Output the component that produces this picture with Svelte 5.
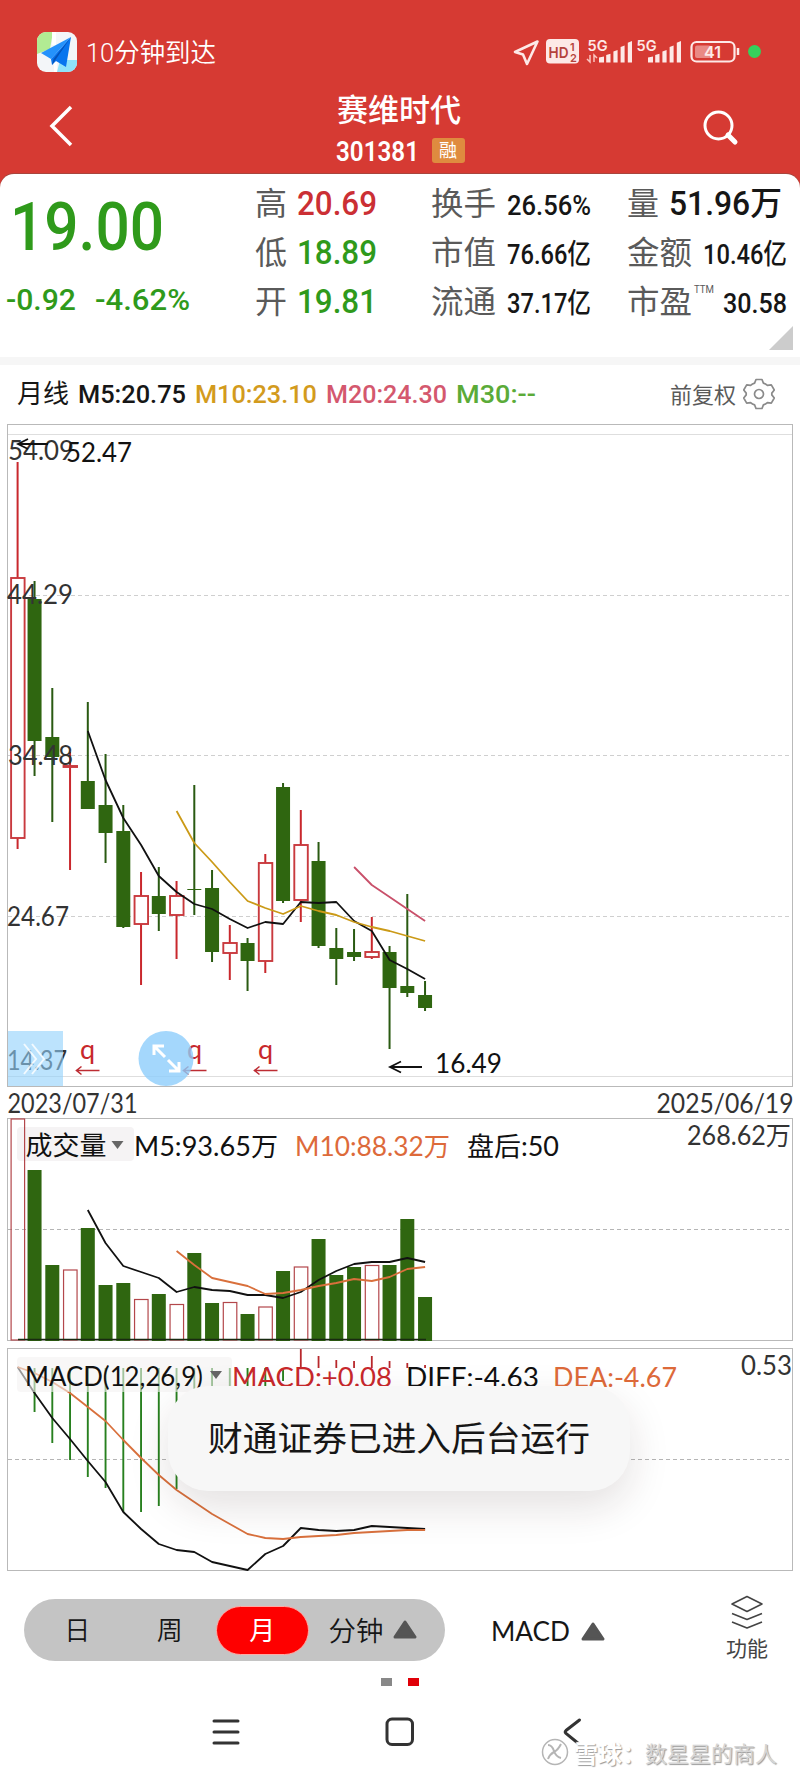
<script lang="ts">
  interface Candle {
    up: boolean
    high: number
    top: number
    bottom: number
    low: number
  }

  interface Label {
    text: string
    x: number
    y: number
    width: number
    cls?: string
    size?: number
  }

  // Chart geometry
  const X0 = 16.8
  const STEP = 17.75
  const BAR = 14
  const cx = (i: number) => Math.max(17.6, X0 + i * STEP)

  const raw: [number, number, number, number, number][] = [
    [1, 462, 578, 838, 849],
    [0, 581, 599, 741, 776],
    [0, 688, 737, 757, 822],
    [1, 752, 766, 767, 870],
    [0, 702, 781, 809, 809],
    [0, 754, 805, 833, 863],
    [0, 805, 831, 927, 928],
    [1, 872, 896, 924, 985],
    [0, 867, 896, 914, 931],
    [1, 881, 896, 915, 959],
    [0, 785, 889, 890, 915],
    [0, 870, 888, 952, 962],
    [1, 925, 943, 953, 980],
    [0, 938, 943, 961, 991],
    [1, 854, 863, 961, 973],
    [0, 783, 787, 901, 903],
    [1, 810, 845, 900, 922],
    [0, 842, 861, 946, 948],
    [0, 928, 948, 959, 985],
    [0, 929, 952, 957, 961],
    [1, 917, 952, 957, 959],
    [0, 946, 952, 988, 1049],
    [0, 894, 986, 993, 997],
    [0, 981, 995, 1008, 1011]
  ]
  const candles: Candle[] = raw.map(([up, high, top, bottom, low]) => ({ up: !!up, high, top, bottom, low }))

  const volumes = [
    1119, 1170, 1265, 1270, 1228, 1285, 1283, 1299.5, 1294, 1304.5, 1253, 1303,
    1302.5, 1314, 1307, 1271, 1267, 1239, 1275, 1267, 1265.5, 1265, 1219, 1297
  ]

  // Lines: first bar index, then one y per bar
  const line = (start: number, ys: number[]) => ys.map((y, i) => `${cx(start + i).toFixed(1)},${y}`).join(' ')

  const ma5 = line(4, [731, 780, 818, 845, 876, 892, 904, 909, 919, 928, 922, 924, 902, 903, 902, 921, 931, 960, 969, 979])
  const ma10 = line(9, [811, 843, 862, 882, 901, 908, 914, 906, 911, 915, 922, 927, 931, 936, 941])
  const ma20 = line(19, [867, 885, 897, 909, 921])
  const vol5 = line(4, [1210, 1243, 1266, 1272, 1278, 1292, 1287, 1290, 1291, 1295, 1295, 1298, 1292, 1280, 1271, 1264, 1262, 1262, 1258, 1262])
  const vol10 = line(9, [1251, 1265, 1278, 1282, 1286, 1294, 1293, 1290, 1286, 1283, 1279, 1281, 1277, 1269, 1267])
  const diff = line(0, [
    1367, 1393, 1418, 1439, 1461, 1482, 1512, 1529, 1544, 1550, 1552, 1562,
    1566, 1570, 1554, 1546, 1528, 1530, 1531, 1530, 1526, 1527, 1528, 1529
  ])
  const dea = line(0, [
    1367, 1373, 1382, 1393, 1407, 1421, 1440, 1458, 1475, 1490, 1502, 1514,
    1524, 1534, 1538, 1539, 1537, 1536, 1535, 1533, 1532, 1531, 1530, 1530
  ])

  const MACD_ZERO = 1368
  const macd = [
    1368, 1412, 1443, 1460, 1477, 1488, 1512, 1512, 1506, 1489, 1450, 1440,
    1420, 1400, 1390, 1381, 1349, 1356, 1360, 1361, 1356, 1361, 1363, 1365
  ]

  const axisLabels: Label[] = [
    { text: '54.09', x: 8, y: 460, width: 66, cls: 'axis' },
    { text: '52.47', x: 66, y: 462, width: 66 },
    { text: '44.29', x: 7, y: 604, width: 66, cls: 'axis' },
    { text: '34.48', x: 8, y: 764.5, width: 65, cls: 'axis' },
    { text: '24.67', x: 7, y: 925.5, width: 62, cls: 'axis' },
    { text: '16.49', x: 435, y: 1072.5, width: 67 },
    { text: '2023/07/31', x: 7.5, y: 1113, width: 130, cls: 'axis' },
    { text: '2025/06/19', x: 656.5, y: 1113, width: 137, cls: 'axis' },
    { text: '268.62万', x: 687, y: 1144.5, width: 104, cls: 'axis' }
  ]

  const volumeLabels: Label[] = [
    { text: '成交量', x: 25.5, y: 1155, width: 81, size: 26 },
    { text: 'M5:93.65万', x: 134, y: 1156, width: 144 },
    { text: 'M10:88.32万', x: 295, y: 1156, width: 155, cls: 'orange' },
    { text: '盘后:50', x: 467, y: 1156, width: 92 }
  ]

  const macdLabels: Label[] = [
    { text: 'MACD(12,26,9)', x: 25, y: 1385.5, width: 178 },
    { text: 'MACD:+0.08', x: 232, y: 1387, width: 160, cls: 'red' },
    { text: 'DIFF:-4.63', x: 406, y: 1387, width: 133 },
    { text: 'DEA:-4.67', x: 553, y: 1387, width: 124, cls: 'orange' }
  ]

  const exMarks = [87.5, 194.5, 265.5]
  const periods = ['日', '周', '月']
  let activePeriod = $state('月')
</script>

<!-- One line of text set to a given width, the box is as tall as its capitals -->
{#snippet fit(text: string, width: number, size: number, cls = '')}
  <svg class="fit {cls}" {width} height={Math.round(size * 0.71)}>
    <text x="0" y={Math.round(size * 0.71)} font-size={size} textLength={width} lengthAdjust="spacingAndGlyphs">{text}</text>
  </svg>
{/snippet}

{#snippet labels(list: Label[])}
  {#each list as l}
    <text class={l.cls} x={l.x} y={l.y} font-size={l.size ?? 26} textLength={l.width} lengthAdjust="spacingAndGlyphs">{l.text}</text>
  {/each}
{/snippet}

{#snippet signal()}
  <path d="M0 23v-5l5-1v6zM7.2 23v-7.5l4.3-1.3V23zM14.4 23V12l4.2-1.5V23zM21.6 23V7.5l4-1.5v17zM28.8 23V3.2L33 1.5V23z" fill="#fde9e7" />
{/snippet}

<div class="phone">
  <header>
    <div class="status">
      <svg class="app" width="40" height="40" viewBox="0 0 40 40">
        <defs>
          <clipPath id="tile"><rect width="40" height="40" rx="9" /></clipPath>
        </defs>
        <g clip-path="url(#tile)">
          <rect width="40" height="40" fill="#f3f6f8" />
          <path d="M0 0h16L13 17 0 22z" fill="#b2eb93" />
          <path d="M20 40l3-12h17v12z" fill="#8fe3fa" />
          <path d="M15 0h4v13h-4zM17 30h3v10h-3z" fill="#fff" />
          <path d="M34 5L4 21l10 6z" fill="#2492fb" />
          <path d="M34 5L14 27l1 6 4-4 10 6z" fill="#0875ee" />
          <path d="M34 5L15 33l1.500-6z" fill="#0452b8" />
        </g>
      </svg>
      {@render fit('10分钟到达', 130, 26, 'white arrival')}
      <svg class="indicators" width="254" height="30" viewBox="510 37 254 30">
        <path d="M515 52l22.500-10.500L527 64l-4-9.500z" fill="none" stroke="#fde9e7" stroke-width="2.600" stroke-linejoin="round" />
        <rect x="546" y="39" width="33" height="24.500" rx="4" fill="#fde9e7" />
        <g class="hd">
          <text x="548.500" y="57.500" font-size="15" textLength="20" lengthAdjust="spacingAndGlyphs">HD</text>
          <text x="570" y="50.500" font-size="11">1</text>
          <text x="570" y="61.500" font-size="11">2</text>
        </g>
        <g class="net">
          <text x="587.500" y="50.500" font-size="14.500" textLength="20" lengthAdjust="spacingAndGlyphs">5G</text>
          <text x="636.500" y="50.500" font-size="14.500" textLength="20" lengthAdjust="spacingAndGlyphs">5G</text>
        </g>
        <path d="M590 55v7l-3-3M594 62v-7l3 3" fill="none" stroke="#fbc5c0" stroke-width="1.500" />
        <g transform="translate(599 39.500)">{@render signal()}</g>
        <g transform="translate(648 39.500)">{@render signal()}</g>
        <rect x="691.500" y="42" width="43" height="19.500" rx="5" fill="none" stroke="#fde9e7" stroke-width="2.200" />
        <rect x="695" y="45.500" width="16" height="12.500" rx="2" fill="#e98a85" />
        <path d="M738 48v7" stroke="#fde9e7" stroke-width="2.500" />
        <text class="net" x="704" y="57.500" font-size="16" textLength="17" lengthAdjust="spacingAndGlyphs">41</text>
        <circle cx="754.500" cy="51.500" r="6.500" fill="#35d05c" />
      </svg>
    </div>
    <div class="title-bar">
      <svg width="24" height="42" viewBox="0 0 24 42">
        <path d="M22 2L3 21l19 19" fill="none" stroke="#fff" stroke-width="3.500" />
      </svg>
      <div class="title">
        {@render fit('赛维时代', 124, 31, 'white medium')}
        <div class="code">
          {@render fit('301381', 83, 28, 'white bold')}
          <span class="badge">融</span>
        </div>
      </div>
      <svg width="36" height="36" viewBox="0 0 36 36" fill="none" stroke="#fff">
        <circle cx="15.500" cy="15.500" r="13.500" stroke-width="3" />
        <path d="M25 25l7 7" stroke-width="5" stroke-linecap="round" />
      </svg>
    </div>
  </header>

  <div class="sheet">
    <section class="quote">
      <div class="last">
        {@render fit('19.00', 154, 67, 'green medium')}
        <div class="change">
          {@render fit('-0.92', 70, 29.500, 'green medium')}
          {@render fit('-4.62%', 95, 29.500, 'green medium')}
        </div>
      </div>
      <div class="col col-a">
        <div>{@render fit('高', 32, 32, 'dim')}{@render fit('20.69', 80, 33, 'crimson medium')}</div>
        <div>{@render fit('低', 32, 32, 'dim')}{@render fit('18.89', 80, 33, 'green medium')}</div>
        <div>{@render fit('开', 32, 32, 'dim')}{@render fit('19.81', 80, 33, 'green medium')}</div>
      </div>
      <div class="col col-b">
        <div>{@render fit('换手', 65, 32, 'dim')}{@render fit('26.56%', 84, 28, 'medium')}</div>
        <div>{@render fit('市值', 65, 32, 'dim')}{@render fit('76.66亿', 84, 28, 'medium')}</div>
        <div>{@render fit('流通', 65, 32, 'dim')}{@render fit('37.17亿', 84, 28, 'medium')}</div>
      </div>
      <div class="col col-c">
        <div class="volume">{@render fit('量', 32, 32, 'dim')}{@render fit('51.96万', 113, 33, 'medium')}</div>
        <div>{@render fit('金额', 65, 32, 'dim')}{@render fit('10.46亿', 84, 28, 'medium')}</div>
        <div>
          {@render fit('市盈', 65, 32, 'dim')}
          {@render fit('TTM', 20, 11, 'dim ttm')}
          {@render fit('30.58', 64, 28, 'medium')}
        </div>
      </div>
      <i class="corner"></i>
    </section>

    <div class="averages">
      {@render fit('月线', 52, 26)}
      {@render fit('M5:20.75', 108, 26.500, 'medium')}
      {@render fit('M10:23.10', 122, 26.500, 'medium gold')}
      {@render fit('M20:24.30', 121, 26.500, 'medium rose')}
      {@render fit('M30:--', 80, 26.500, 'medium lime')}
      <span class="adjust">{@render fit('前复权', 66, 22, 'dim')}</span>
      <svg class="gear" width="32" height="32" viewBox="-16 -16 32 32" fill="none" stroke="#8a8a8a" stroke-width="1.700" stroke-linejoin="round">
        <path d="M-3-14.500h6l1.400 3.600a11.500 11.500 0 0 1 4 2.300l3.900-.6 3 5.200-2.500 3.100v1.800l2.500 3.100-3 5.200-3.900-.6a11.500 11.500 0 0 1-4 2.300L3 14.500h-6l-1.400-3.600a11.500 11.500 0 0 1-4-2.300l-3.900.6-3-5.200 2.500-3.100v-1.800l-2.500-3.100 3-5.200 3.900.6a11.500 11.500 0 0 1 4-2.300z" />
        <circle r="4.500" />
      </svg>
    </div>

    <div class="charts">
      <svg width="800" height="1165" viewBox="0 415 800 1165">
        <!-- Frames and grid -->
        <g class="frame">
          <rect x="7.500" y="424.500" width="785" height="662" />
          <rect x="7.500" y="1118.500" width="785" height="222" />
          <rect x="7.500" y="1348.500" width="785" height="222" />
        </g>
        <path class="inner" d="M8 434.500h784M8 1076.500h784" />
        <path class="grid" d="M8 595.500h784M8 755.500h784M8 916.500h784" />
        <path class="grid dark" d="M8 1229.500h784M8 1459.500h784" />

        <!-- Price candles -->
        {#each candles as c, i}
          <g class={c.up ? 'up' : 'down'}>
            <path d="M{cx(i)} {c.high}V{c.top}M{cx(i)} {c.bottom}V{c.low}" />
            <rect
              x={cx(i) - BAR / 2 + (c.up ? 0.5 : 0)}
              y={c.top}
              width={c.up ? BAR - 0.5 : BAR}
              height={c.bottom - c.top}
            />
          </g>
        {/each}
        <polyline class="line" points={ma5} />
        <polyline class="line gold" points={ma10} />
        <polyline class="line rose" points={ma20} />

        {@render labels(axisLabels)}
        <g class="arrow">
          <path d="M48 444H19M28 439l-10 5 10 5" />
          <path d="M422 1067h-31M401 1061.500l-11 5.500 11 5.500" />
        </g>

        <!-- Ex-rights marks -->
        {#each exMarks as x}
          <text class="red" {x} y="1059" font-size="27" text-anchor="middle">q</text>
          <path class="ex" d="M{x + 12} 1070.500H{x - 11}M{x - 6} 1066.500l-5 4 5 4" />
        {/each}

        <text class="axis" x="7" y="1069.500" font-size="26" textLength="60" lengthAdjust="spacingAndGlyphs">14.37</text>
        <rect x="8" y="1031" width="55" height="55" fill="#8fd0fb" opacity="0.600" />
        <path class="fast" d="M24 1044l12 15-12 15M32 1044l12 15-12 15" />
        <circle cx="166" cy="1058.500" r="27.500" fill="#8dcdfb" opacity="0.800" />
        <path class="expand" d="M165 1057l-11-11M154 1055v-9h10M168 1060l11 11M179 1062v9h-10" />

        <!-- Volume -->
        <rect x="17" y="1127" width="117" height="34" rx="4" fill="#f5f3f4" />
        {#each volumes as top, i}
          {#if candles[i].up}
            <rect class="vol-up" x={cx(i) - 6.500} y={top} width="13.500" height={1340 - top} />
          {:else}
            <rect class="vol-down" x={cx(i) - 7} y={top} width="14" height={1341 - top} />
          {/if}
        {/each}
        <path d="M18 1339.500H426" stroke="#182a10" stroke-width="1.500" />
        <polyline class="line" points={vol5} />
        <polyline class="line orange" points={vol10} />
        <path d="M111.500 1141h12l-6 8z" fill="#666" />
        {@render labels(volumeLabels)}

        <!-- MACD -->
        {#each macd as y, i}
          <path class={y < MACD_ZERO ? 'hist-up' : 'hist-down'} d="M{cx(i)} {MACD_ZERO}V{y}" />
        {/each}
        <polyline class="line" points={diff} />
        <polyline class="line orange" points={dea} />
        <rect x="17" y="1357" width="215" height="35" rx="4" fill="#f3f2f2" opacity="0.600" />
        <path d="M210 1371h12l-6 8z" fill="#666" />
        {@render labels(macdLabels)}
        <text class="axis" x="741" y="1374.500" font-size="26" textLength="51" lengthAdjust="spacingAndGlyphs">0.53</text>
      </svg>
      <div class="toast">{@render fit('财通证券已进入后台运行', 382, 34.500)}</div>
    </div>

    <div class="tools">
      <div class="periods">
        {#each periods as p}
          <button class:active={p === activePeriod} onclick={() => (activePeriod = p)}>{p}</button>
        {/each}
        <button class="minutes">
          分钟
          <svg width="24" height="19" viewBox="0 0 24 19"><path d="M12 2l10 15H2z" /></svg>
        </button>
      </div>
      <div class="indicator">
        {@render fit('MACD', 79, 27)}
        <svg class="tri" width="24" height="19" viewBox="0 0 24 19"><path d="M12 2l10 15H2z" /></svg>
      </div>
      <div class="more">
        <svg width="34" height="34" viewBox="0 0 34 34" fill="none" stroke="#444" stroke-width="1.600" stroke-linejoin="round">
          <path d="M17 1.500L32 9l-15 7.500L2 9zM2 18.500l15 6 15-6M2 27l15 6 15-6" />
        </svg>
        功能
      </div>
    </div>

    <div class="pager"><i></i><i class="on"></i></div>

    <nav>
      <svg width="28" height="28" viewBox="0 0 28 28"><path d="M2 3h24M2 14h24M2 25h24" /></svg>
      <svg width="30" height="30" viewBox="0 0 30 30"><rect x="2" y="2" width="25.500" height="25.500" rx="5" /></svg>
      <svg width="20" height="30" viewBox="0 0 20 30"><path d="M17.500 3L4 13.500q-1.500 1.500 0 3L17 27" /></svg>
    </nav>
  </div>

  <div class="watermark">
    <svg width="28" height="28" viewBox="0 0 28 28" fill="none" stroke="#b5b5b5" stroke-width="1.500">
      <circle cx="14" cy="14" r="12.500" fill="#fff" />
      <path d="M7 7q4 0 6 6t7 7M20 6q-3 6-7 8t-6 7" stroke-width="2" />
    </svg>
    <b>雪球：</b><span>数星星的商人</span>
  </div>
</div>

<style>
  :global(body) {
    margin: 0;
    background: #fefefe;
  }

  .phone {
    position: relative;
    width: 800px;
    height: 1778px;
    overflow: hidden;
    background: #d63a33;
    color: #161616;
    font-family: Roboto, 'Noto Sans CJK SC', sans-serif;
  }

  svg {
    display: block;
    flex: none;
  }

  .fit {
    overflow: visible;
    fill: #161616;
  }

  .fit.medium { font-weight: 500; }
  .fit.bold { font-weight: 600; }
  .fit.white { fill: #fff; }
  .fit.dim { fill: #5a5a5a; }
  .fit.green { fill: #2f9a1b; }
  .fit.crimson { fill: #cb2f34; }
  .fit.gold { fill: #d39b1d; }
  .fit.rose { fill: #d4586e; }
  .fit.lime { fill: #5bab38; }

  /* Header */
  header {
    height: 174px;
    box-sizing: border-box;
    padding-top: 31px;
  }

  .status {
    display: flex;
    align-items: center;
    height: 41px;
    padding: 0 36px 0 37px;
  }

  .arrival {
    margin: 2px 0 0 9px;
    font-weight: 350;
  }

  .indicators {
    margin-left: auto;
    font-family: Inter, sans-serif;
    font-weight: 600;
  }

  .hd { fill: #b5423c; }
  .net { fill: #fde9e7; }

  .title-bar {
    display: flex;
    justify-content: space-between;
    padding: 20px 61px 0 49px;
    height: 82px;
  }

  .title-bar > svg:first-child {
    margin-top: 13px;
  }

  .title-bar > svg:last-child {
    margin-top: 18px;
  }

  .title {
    width: 130px;
    margin-left: 27px;
    padding-top: 7px;
  }

  .code {
    display: flex;
    align-items: center;
    gap: 13px;
    margin-top: 17px;
    margin-left: -1px;
  }

  .badge {
    flex: none;
    width: 33px;
    height: 25px;
    border-radius: 3px;
    background: #df8b3f;
    color: #fff;
    font-size: 18px;
    line-height: 25px;
    text-align: center;
  }

  .sheet {
    height: 1604px;
    border-radius: 14px 14px 0 0;
    background: #fff;
    box-shadow: 0 -1px #a8453d;
  }

  /* Quote */
  .quote {
    position: relative;
    display: flex;
    height: 191px;
    box-sizing: border-box;
    padding-top: 17px;
    border-bottom: 8px solid #f6f6f6;
  }

  .last {
    width: 255px;
    box-sizing: border-box;
    padding: 11px 0 0 10px;
  }

  .change {
    display: flex;
    gap: 19px;
    margin: 39px 0 0 -4px;
  }

  .col {
    display: grid;
    grid-auto-rows: 24px;
    row-gap: 25px;
    align-content: start;
  }

  .col > div {
    display: flex;
    align-items: flex-end;
  }

  .col-a {
    width: 176px;
  }

  .col-a > div {
    gap: 10px;
  }

  .col-b {
    width: 196px;
  }

  .col-b > div {
    gap: 11px;
  }

  .col-c {
    width: 160px;
  }

  .col-c > div {
    justify-content: space-between;
  }

  .col-c > .volume {
    justify-content: flex-start;
    gap: 10px;
  }

  .ttm {
    align-self: flex-start;
    margin: -4px 8px 0 0;
  }

  .corner {
    position: absolute;
    right: 7px;
    bottom: 7px;
    border: 12px solid;
    border-color: transparent #ccc #ccc transparent;
  }

  .averages {
    display: flex;
    align-items: flex-end;
    gap: 9px;
    height: 50px;
    box-sizing: border-box;
    padding: 0 25px 12px 17px;
  }

  .adjust {
    margin-left: auto;
    margin-right: -2px;
  }

  .gear {
    margin-bottom: -7px;
  }

  /* Charts */
  .charts {
    position: relative;
    height: 1165px;
  }

  .charts > svg {
    font-family: Lato, 'Noto Sans CJK SC', sans-serif;
    fill: #111;
  }

  .charts text.axis { fill: #333; }
  .charts text.orange { fill: #dd6a3a; }
  .charts text.red { fill: #c8282c; }

  .frame rect {
    fill: none;
    stroke: #b9b9b9;
  }

  .inner { stroke: #dedede; }

  .grid {
    stroke: #cfcfcf;
    stroke-dasharray: 4 3;
  }

  .grid.dark { stroke: #b5b5b5; }

  .up rect {
    fill: #fff;
    stroke: #c93a3e;
    stroke-width: 1.9;
  }

  .up path {
    stroke: #c9282d;
    stroke-width: 2;
  }

  .down rect {
    fill: #2f6610;
    stroke: none;
  }

  .down path {
    stroke: #2a5a12;
    stroke-width: 2;
  }

  .line {
    fill: none;
    stroke: #111;
    stroke-width: 1.8;
    stroke-linejoin: round;
  }

  .line.gold { stroke: #cb9a17; }
  .line.rose { stroke: #c9506a; }
  .line.orange { stroke: #d9703c; }

  .arrow path {
    fill: none;
    stroke: #111;
    stroke-width: 1.8;
  }

  .ex {
    fill: none;
    stroke: #bd2c33;
    stroke-width: 1.6;
  }

  .fast {
    fill: none;
    stroke: #fff;
    stroke-width: 2;
    opacity: 0.8;
  }

  .expand {
    fill: none;
    stroke: #fff;
    stroke-width: 3;
  }

  .vol-up {
    fill: none;
    stroke: #b3474b;
    stroke-width: 1.2;
  }

  .vol-down { fill: #2f6610; }
  .hist-up { stroke: #b8282c; stroke-width: 1.8; }
  .hist-down { stroke: #28801f; stroke-width: 1.9; }

  .toast {
    position: absolute;
    left: 168px;
    top: 971px;
    display: flex;
    align-items: center;
    justify-content: center;
    width: 462px;
    height: 105px;
    border-radius: 40px;
    background: #f7f7f7;
    box-shadow: 0 16px 40px rgba(50, 20, 20, 0.13);
  }

  /* Bottom tools */
  .tools {
    display: flex;
    align-items: center;
    height: 100px;
    box-sizing: border-box;
    padding: 0 30px 0 24px;
  }

  .periods {
    display: flex;
    align-items: center;
    width: 421px;
    height: 62px;
    box-sizing: border-box;
    padding: 0 20px 0 7px;
    border-radius: 31px;
    background: #c4c4c4;
  }

  .periods button {
    width: 92.5px;
    height: 49px;
    padding: 0 0 2px;
    border: 0;
    border-radius: 25px;
    background: none;
    color: #161616;
    font: 350 26px/44px 'Noto Sans CJK SC', sans-serif;
  }

  .periods button.active {
    border: 1px solid #ffaaa5;
    background: #fe0000;
    color: #fff;
    font-weight: 400;
  }

  .periods .minutes {
    display: flex;
    align-items: center;
    gap: 9px;
    width: auto;
    margin-left: 20px;
    font-size: 27.5px;
  }

  .minutes svg,
  .tri {
    fill: #555;
    stroke: #555;
    stroke-width: 3;
    stroke-linejoin: round;
  }

  .indicator {
    display: flex;
    align-items: center;
    gap: 11px;
    margin: 2px 0 0 46px;
    font-family: Lato, sans-serif;
  }

  .more {
    display: flex;
    flex-direction: column;
    align-items: center;
    gap: 3px;
    width: 46px;
    margin-left: auto;
    color: #444;
    font-size: 21px;
    line-height: 34px;
    white-space: nowrap;
  }

  .pager {
    display: flex;
    gap: 16px;
    margin: -2px 0 0 381px;
  }

  .pager i {
    width: 11px;
    height: 8px;
    background: #888;
  }

  .pager .on {
    background: #e00008;
  }

  nav {
    display: flex;
    align-items: center;
    height: 30px;
    margin: 31px 0 0 212px;
    fill: none;
    stroke: #333;
    stroke-width: 3;
    stroke-linecap: round;
  }

  nav svg + svg {
    margin-left: 145px;
  }

  nav svg:last-child {
    margin-left: 147px;
  }

  .watermark {
    position: absolute;
    left: 541px;
    top: 1734px;
    display: flex;
    align-items: center;
    height: 36px;
    color: #d6d6d6;
    font-size: 22px;
    text-shadow: 1px 1px 1px #999, -1px -1px 1px #fff;
    white-space: nowrap;
  }

  .watermark b {
    width: 71px;
    margin-left: 5px;
    color: #fff;
    font-size: 24px;
  }
</style>
